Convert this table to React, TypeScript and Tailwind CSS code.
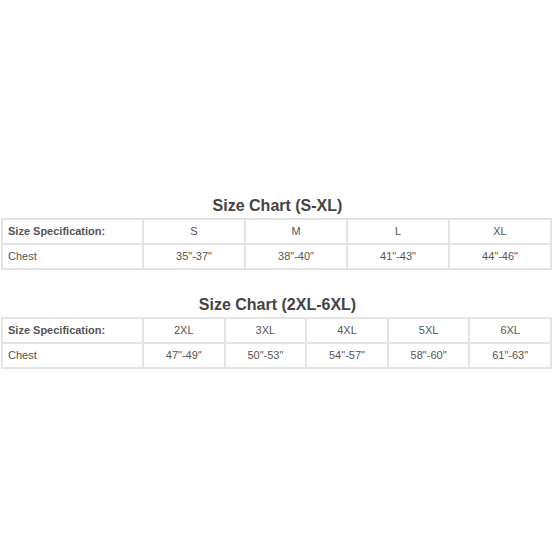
import React from 'react';

const cell = "border-2 border-[#e4e4e4] h-[25px] text-[11px] text-[#555] text-center p-0";

const SizeTable: React.FC<{ title: string; sizes: string[]; chest: string[] }> = ({ title, sizes, chest }) => {
  return (
    <div className="flex flex-col items-center">
      <div className="text-[16px] leading-[20px] font-bold text-[#444]">{title}</div>
      <table className="mt-[2px] w-[551px] border-collapse table-fixed ml-[1px] self-start">
        <colgroup>
          <col className="w-[141px]" />
          {sizes.map((s) => (
            <col key={s} />
          ))}
        </colgroup>
        <tbody>
          <tr>
            <td className={cell + " !text-left pl-[5px] font-bold"}>Size Specification:</td>
            {sizes.map((s) => (
              <td key={s} className={cell}>{s}</td>
            ))}
          </tr>
          <tr>
            <td className={cell + " !text-left pl-[5px]"}>Chest</td>
            {chest.map((c) => (
              <td key={c} className={cell}>{c}</td>
            ))}
          </tr>
        </tbody>
      </table>
    </div>
  );
};

const App: React.FC = () => {
  return (
    <div className="w-[555px] h-[555px] bg-white flex flex-col pt-[196px] gap-[25px]" style={{ fontFamily: '"Liberation Sans", Arial, sans-serif' }}>
      <SizeTable
        title="Size Chart (S-XL)"
        sizes={["S", "M", "L", "XL"]}
        chest={['35"-37"', '38"-40"', '41"-43"', '44"-46"']}
      />
      <SizeTable
        title="Size Chart (2XL-6XL)"
        sizes={["2XL", "3XL", "4XL", "5XL", "6XL"]}
        chest={['47"-49"', '50"-53"', '54"-57"', '58"-60"', '61"-63"']}
      />
    </div>
  );
};

export default App;
